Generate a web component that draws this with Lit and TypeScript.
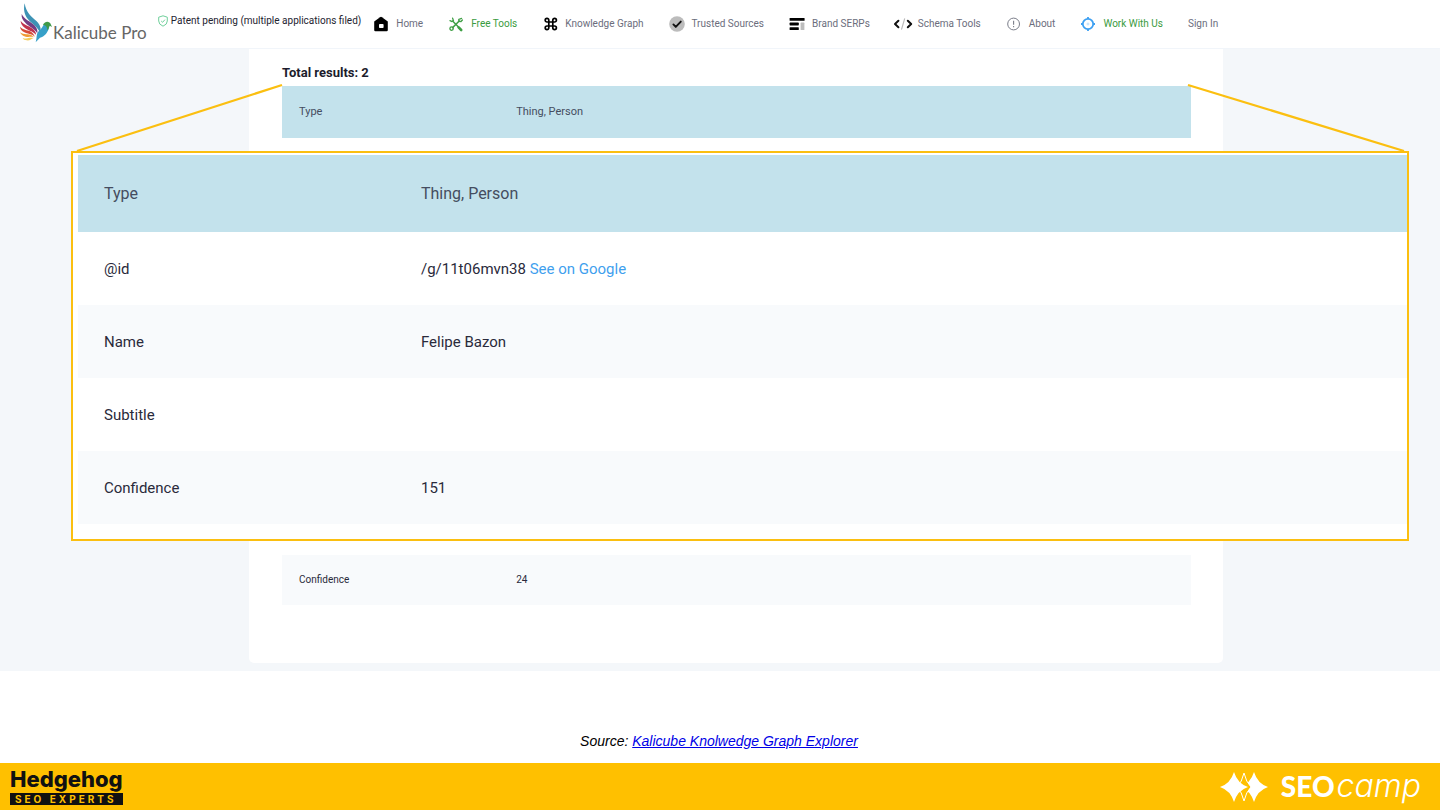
import { LitElement, html, css, svg } from "lit";
import { customElement, property } from "lit/decorators.js";

const icons: Record<string, unknown> = {
  home: svg`<path d="M1.2 5.6 7 1.2Q8 .5 9 1.2l5.800 4.400V14q0 1.200-1.200 1.200H2.400Q1.200 15.200 1.200 14Z" fill="#000"/><rect x="6" y="8" width="4.600" height="4" rx=".8" fill="#fff"/>`,
  tools: svg`<g stroke="#3f9f45" fill="none" stroke-linecap="round"><path d="M4.800 5.200 12 12.600" stroke-width="1.500"/><path d="M4.600 2.200 5.400 4.400 3.800 5.600 2 4.600" stroke-width="1.300"/><path d="M10.600 11.400 13.200 14" stroke-width="2.600"/><path d="M11.200 5 4.600 11.600" stroke-width="1.500"/><path d="M13.600 2.400 10.800 3.400 10.900 5.300 13 5.500 14.400 4" stroke-width="1.300"/><circle cx="3.600" cy="12.600" r="1.700" stroke-width="1.300"/></g>`,
  graph: svg`<g stroke="#000" stroke-width="1.700" fill="none"><path d="M6.800 4.200v7.600a1.800 1.800 0 1 1-1.800-1.800h7.600a1.800 1.800 0 1 1-1.800 1.800V4.200a1.800 1.800 0 1 1 1.800 1.800H5a1.800 1.800 0 1 1 1.800-1.800Z"/></g>`,
  trusted: svg`<circle cx="8" cy="8" r="7.800" fill="#bcbcbc"/><path d="m4.400 8.400 2.400 2.500 5-5.300" fill="none" stroke="#111" stroke-width="1.900" stroke-linecap="round" stroke-linejoin="round"/>`,
  brand: svg`<rect x=".6" y="2" width="15" height="2.800" rx=".6"/><rect x=".6" y="6.600" width="9.200" height="2.800" rx=".6"/><rect x=".6" y="11.200" width="9.200" height="2.800" rx=".6"/><rect x="11.600" y="6.600" width="3.800" height="7.400" rx=".6" fill="#bdbdbd"/>`,
  schema: svg`<g fill="none" stroke-width="2" stroke-linecap="round" stroke-linejoin="round"><path d="M3.400 4.800 0 8l3.400 3.200M12.800 4.800 16.200 8l-3.400 3.200" stroke="#111"/><path d="M9.600 2.800 6.600 13.200" stroke="#bbb" stroke-width="1.200"/></g>`,
  about: svg`<g fill="none" stroke="#7a7d89"><circle cx="7.600" cy="8" r="5.900" stroke-width="1"/><path d="M7.600 4.800v4" stroke-width="1.100"/><path d="M7.600 10v1.300" stroke-width="1.100"/></g>`,
  work: svg`<g fill="none" stroke="#3ea0f2"><circle cx="8" cy="8" r="5.200" stroke-width="1.800"/><path d="M8 1V3M8 13v2M1 8H3M13 8h2" stroke-width="1.800"/><circle cx="8" cy="8" r="1" stroke="#a5d2fa" stroke-width=".7"/></g>`,
};

interface NavEntry { label: string; icon?: string; accent?: boolean }

const NAV: NavEntry[] = [
  { label: "Home", icon: "home" },
  { label: "Free Tools", icon: "tools", accent: true },
  { label: "Knowledge Graph", icon: "graph" },
  { label: "Trusted Sources", icon: "trusted" },
  { label: "Brand SERPs", icon: "brand" },
  { label: "Schema Tools", icon: "schema" },
  { label: "About", icon: "about" },
  { label: "Work With Us", icon: "work", accent: true },
  { label: "Sign In" },
];

@customElement("site-header")
class SiteHeader extends LitElement {
  static styles = css`
    :host { display: block; font-family: Roboto, sans-serif; }
    header { display: flex; align-items: center; height: 48px; padding-left: 18px; background: #fff; border-bottom: 1px solid #f1f5fa; white-space: nowrap; }
    .brand { display: flex; align-items: flex-end; height: 42px; margin-bottom: 4px; color: #666; text-decoration: none; font: 17px/20px Lato, sans-serif; }
    .bird { width: 35px; height: 41px; }
    .patent { display: flex; align-items: center; gap: 3px; margin: 0 0 7px 11px; font-size: 10px; line-height: 16px; color: #23232f; }
    .patent svg { width: 10px; height: 12px; }
    nav { display: flex; align-items: center; gap: 25px; margin-left: 12px; }
    nav a { display: flex; align-items: center; gap: 7px; font-size: 10px; line-height: 16px; color: #6b6d7c; text-decoration: none; }
    nav a.accent { color: #3a9b40; }
    nav svg { width: 16px; height: 16px; overflow: visible; }
  `;
  render() {
    return html`<header>
      <a class="brand" href="#">
        <svg class="bird" viewBox="54 6 105 123" aria-hidden="true">
          <path d="M74 10C78 38 94 50 110 64 122 76 124 88 120 98 114 82 96 72 84 58 72 44 70 26 74 10Z" fill="#3d93b5"/>
          <path d="M65 42C74 60 92 64 103 76 112 86 113 92 112 100 102 84 86 80 76 68 68 60 64 54 65 42Z" fill="#743d82"/>
          <path d="M62 62C70 76 90 77 100 88 106 94 108 98 108 104 98 92 84 92 74 83 66 77 62 70 62 62Z" fill="#c0334e"/>
          <path d="M60 80C70 92 88 89 97 98 102 103 103 106 104 110 94 101 82 102 73 97 65 93 61 88 60 80Z" fill="#d64c38"/>
          <path d="M60 97C72 106 86 101 95 106L102 112C92 109 86 112 77 110 68 108 63 104 60 97Z" fill="#ef9b36"/>
          <path d="M68 115C78 117 88 111 101 114 94 117 90 122 80 121 74 121 70 119 68 115Z" fill="#f3cb5a"/>
          <path d="M107 127C112 112 107 100 118 92 128 86 128 70 142 70L149 74C146 98 132 110 120 113Z" fill="#37a0c8"/>
          <path d="M129 75C132 65 148 60 153 74L156 81 149 77C145 82 148 86 142 91 142 80 137 75 129 75Z" fill="#3f9a49"/>
        </svg>
        <span>Kalicube Pro</span>
      </a>
      <div class="patent">
        <svg viewBox="0 0 10 12" fill="none" stroke="#5fc98e" aria-hidden="true"><path d="M5 .8 9.300 2.200V6Q9.300 9.500 5 11.200.7 9.500.7 6V2.200Z" stroke-width=".9"/><path d="m3.200 6 1.400 1.300 2.300-2.600" stroke-width=".9"/></svg>
        <span>Patent pending (multiple applications filed)</span>
      </div>
      <nav>
        ${NAV.map((n) => html`<a href="#" class=${n.accent ? "accent" : ""}>${n.icon ? html`<svg viewBox="0 0 16 16" aria-hidden="true">${icons[n.icon]}</svg>` : ""}<span>${n.label}</span></a>`)}
      </nav>
    </header>`;
  }
}

interface Fact { label: string; value: string; link?: string }

@customElement("fact-table")
class FactTable extends LitElement {
  @property({ attribute: false }) rows: Fact[] = [];
  static styles = css`
    :host { display: block; font: 10px/16px Roboto, sans-serif; color: #2a2a3b; }
    table { width: 100%; table-layout: fixed; border-collapse: collapse; }
    th, td { height: 50px; padding: 0 0 0 17px; text-align: left; font-weight: 400; }
    th { width: 24%; box-sizing: border-box; }
    td { padding-left: 16px; }
    .type { background: #c3e2ec; color: #454d60; }
    .type > * { height: 52px; font-size: 11px; }
    .shade { background: #f8fafc; }
    a { color: #3f9fee; text-decoration: none; }
    :host([large]) { font-size: 15px; line-height: 20px; }
    :host([large]) th { height: 73px; padding-left: 26px; }
    :host([large]) td { height: 73px; padding-left: 24px; }
    :host([large]) .type > * { height: 77px; font-size: 16px; }
  `;
  render() {
    return html`<table><tbody>${this.rows.map((r) => html`<tr class=${r.label === "Type" ? "type" : r.label === "Name" || r.label === "Confidence" ? "shade" : ""}>
      <th scope="row">${r.label}</th><td>${r.value}${r.link ? html` <a href="#">${r.link}</a>` : ""}</td></tr>`)}</tbody></table>`;
  }
}

@customElement("app-root")
class AppRoot extends LitElement {
  static styles = css`
    :host { display: flex; flex-direction: column; min-height: 100vh; background: #fff; font-family: Roboto, sans-serif; }
    .stage { padding-bottom: 8px; background: #f4f7fa; }
    .card { margin: 0 217px 0 249px; padding: 0 32px 0 33px; background: #fff; }
    .card-top { padding-top: 14px; padding-bottom: 13px; }
    .card-bottom { padding-top: 14px; padding-bottom: 58px; border-radius: 0 0 5px 5px; }
    h1 { margin: 0 0 3px; font-size: 13px; line-height: 20px; font-weight: 700; color: #1c1c2c; }
    .callout { position: relative; margin: 0 31px 0 71px; padding: 2px 0 15px 5px; border: 2px solid #fbbf10; background: #fff; }
    .connector { position: absolute; bottom: 100%; left: 0; width: 100%; height: 67px; overflow: visible; }
    .source { flex: 1; display: flex; align-items: flex-end; justify-content: center; margin: 0; padding: 0 2px 13px 0; font: italic 14px/18px "Liberation Sans", sans-serif; color: #000; white-space: pre; }
    .source a { color: #0000e6; }
    footer { display: flex; align-items: center; justify-content: space-between; height: 47px; padding: 0 19px 0 10px; background: #ffc000; }
    .hedgehog { display: flex; flex-direction: column; gap: 4px; color: #111; }
    .hedgehog b { font: 800 22px/20px Inter, sans-serif; }
    .hedgehog span { padding: 0 5px; background: #111; color: #ffc000; font: 700 10px/12px Inter, sans-serif; letter-spacing: 3px; }
    .seocamp { display: flex; align-items: center; gap: 13px; color: #fff; }
    .seocamp svg { width: 48px; height: 32px; }
    .seocamp div { display: flex; align-items: baseline; gap: 2px; margin-bottom: 2px; }
    .seocamp b { font: 900 28px/40px Lato, sans-serif; }
    .seocamp i { font: italic 300 32px/40px Inter, sans-serif; }
  `;
  render() {
    return html`
      <site-header></site-header>
      <main class="stage">
        <section class="card card-top">
          <h1>Total results: 2</h1>
          <fact-table .rows=${[{ label: "Type", value: "Thing, Person" }]}></fact-table>
        </section>
        <section class="callout">
          <svg class="connector" viewBox="0 0 1334 67" preserveAspectRatio="none" fill="none" stroke="#fbbf10" stroke-width="2.300" aria-hidden="true">
            <path d="M4 65 209 -1M1115 -1 1331 65" vector-effect="non-scaling-stroke"/>
          </svg>
          <fact-table large .rows=${[
            { label: "Type", value: "Thing, Person" },
            { label: "@id", value: "/g/11t06mvn38", link: "See on Google" },
            { label: "Name", value: "Felipe Bazon" },
            { label: "Subtitle", value: "" },
            { label: "Confidence", value: "151" },
          ]}></fact-table>
        </section>
        <section class="card card-bottom">
          <fact-table .rows=${[{ label: "Confidence", value: "24" }]}></fact-table>
        </section>
      </main>
      <p class="source">Source: <a href="#">Kalicube Knolwedge Graph Explorer</a></p>
      <footer>
        <div class="hedgehog"><b>Hedgehog</b><span>SEO EXPERTS</span></div>
        <div class="seocamp">
          <svg viewBox="0 0 48 32" fill="#fff" aria-hidden="true">
            <path d="M34 1Q37.500 12.500 48 16 37.500 19.500 34 31 30.500 19.500 20 16 30.500 12.500 34 1Z"/>
            <path d="M24 2Q26 11 31 16 26 21 24 30 22 21 17 16 22 11 24 2Z" fill="#ffc000" stroke="#fff"/>
            <path d="M14 1Q17.500 12.500 28 16 17.500 19.500 14 31 10.500 19.500 0 16 10.500 12.500 14 1Z"/>
          </svg>
          <div><b>SEO</b><i>camp</i></div>
        </div>
      </footer>`;
  }
}
